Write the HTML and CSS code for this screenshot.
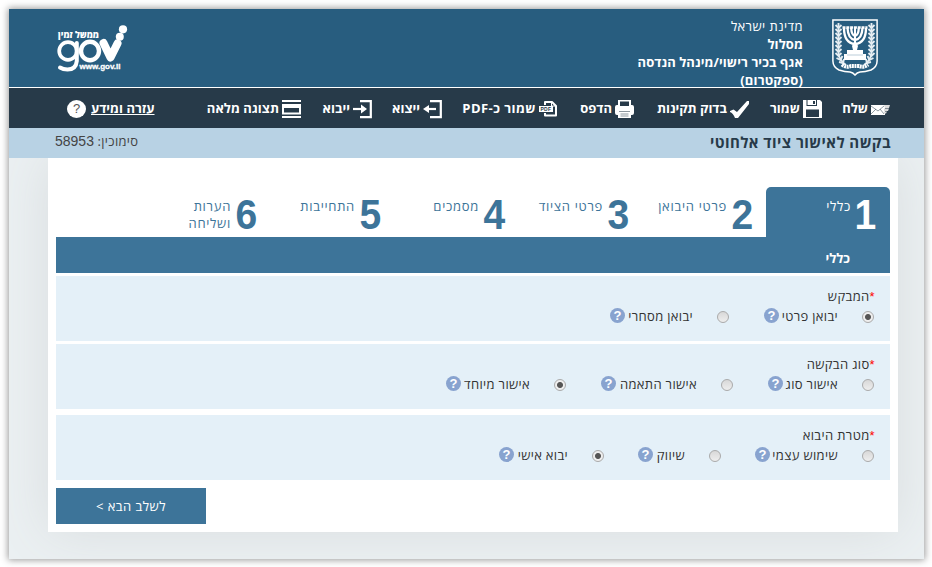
FILE: index.html
```html
<!DOCTYPE html>
<html lang="he" dir="rtl">
<head>
<meta charset="utf-8">
<title>בקשה לאישור ציוד אלחוטי</title>
<link rel="stylesheet" href="styles.css">
</head>
<body>
<div class="page">
  <header class="header">
    <svg class="emblem" viewBox="0 0 46 57" fill="none" stroke="#fff">
      <path d="M.9.9H45.100V42Q45 48 39 51Q33 53 28 53Q25 53.500 23 56Q21 53.500 18 53Q13 53 7 51Q1 48 .9 42Z" stroke-width="1.500"/>
      <g stroke="#e5edf2" stroke-width="1.900">
        <path d="M6.500 4V34Q7 41 14 46M39.500 4V34Q39 41 32 46"/>
        <path d="M3.500 6l3 3 3-3M3.500 10l3 3 3-3M3.500 14l3 3 3-3M3.500 18l3 3 3-3M3.500 22l3 3 3-3M3.500 26l3 3 3-3M3.500 30l3 3 3-3M3.500 34l3 3 3-3M4.500 39l4 2 2-4M7 43l4 1 1-4"/>
        <path d="M36.500 6l3 3 3-3M36.500 10l3 3 3-3M36.500 14l3 3 3-3M36.500 18l3 3 3-3M36.500 22l3 3 3-3M36.500 26l3 3 3-3M36.500 30l3 3 3-3M36.500 34l3 3 3-3M41.500 39l-4 2-2-4M39 43l-4 1-1-4"/>
      </g>
      <g stroke-width="2.300"><path d="M12 9Q12 24 23 25Q34 24 34 9"/><path d="M15.500 9Q16 20 23 21Q30 20 30.500 9"/><path d="M19.200 9Q19.500 16 23 17Q26.500 16 26.800 9"/><path d="M10.500 8.500H35.500" stroke-width="2.500" stroke-dasharray="3 .8"/></g>
      <path d="M22 8h2v15l2 4-1 4h6v4h3v6H12v-6h3v-4h6l-1-4 2-4z" fill="#fff" stroke="none"/>
      <path d="M15 36H31" stroke="#9db8c9" stroke-width=".7"/>
      <path d="M10 45.500Q14 49 19 47H27Q32 49 36 45.500" stroke-width="4" stroke-dasharray="2 .6"/>
    </svg>
    <div class="org">
      <div class="wide">מדינת ישראל</div>
      <div class="b">מסלול</div>
      <div class="b">אגף בכיר רישוי/מינהל הנדסה</div>
      <div class="b wide">(ספקטרום)</div>
    </div>
    <svg class="gov" viewBox="0 0 72 48">
      <g fill="none" stroke="#fff">
        <circle cx="11" cy="26" r="8.800" stroke-width="3.700"/>
        <path d="M19.800 18V36Q19 44.500 10.500 44.500Q6 44.500 3 42.500" stroke-width="4" stroke-linecap="round"/>
        <ellipse cx="33" cy="26" rx="9" ry="9.200" stroke-width="4.400"/>
        <path d="M46.500 18L53.500 32.500L60.500 18.500" stroke-width="8" stroke-linecap="round" stroke-linejoin="round"/>
      </g>
      <circle cx="62.800" cy="11.800" r="4" fill="#fff"/><circle cx="66" cy="4.300" r="4.100" fill="#fff"/>
      <text x="1" y="13" textLength="41" lengthAdjust="spacingAndGlyphs" class="gov-he">ממשל זמין</text>
      <text x="22.500" y="44" textLength="41" lengthAdjust="spacingAndGlyphs" class="gov-url">www.gov.il</text>
    </svg>
  </header>
  <nav class="toolbar">
    <a class="tool t1"><svg viewBox="0 0 19 19"><path d="M0 5h14v10H0z" fill="#fff"/><path d="M0 6l7 5 6-5M0 14l5-5M13 14L9 9" stroke="#273a49" stroke-width=".5" fill="none"/><path d="M13 5h6l-1 3h-4zM13 8.500h5l-1 2.500h-4zM13 11.500h3l-1 2h-2z" fill="#ddd"/></svg><span>שלח</span></a>
    <a class="tool t2"><svg viewBox="0 0 19 19"><path d="M0 0H17L19 2V18H0z" fill="#fff"/><path d="M3.500 0h10.500v6H3.500zM3 9.500h13V17H3z" fill="#273a49"/><path d="M4.500 0h8.500v5h-8.500z" fill="#fff"/><path d="M10 1h2v3h-2z" fill="#273a49"/></svg><span>שמור</span></a>
    <a class="tool t3"><svg viewBox="0 0 19 19"><path d="M0 11L3.500 9.500L7 12L17 1L19 1V4L8 18H5Q3 13 0 12z" fill="#fff"/></svg><span>בדוק תקינות</span></a>
    <a class="tool t4"><svg viewBox="0 0 19 19"><path d="M3 0h13v5h1q2 0 2 2v6q0 2-2 2h-1v3H3v-3H2q-2 0-2-2V7q0-2 2-2h1z" fill="#fff"/><path d="M5 1.500h9V6H5z" fill="#273a49"/><path d="M4 11.500h11M5.500 14h8M5.500 16h8" stroke="#8c969e" fill="none"/></svg><span>הדפס</span></a>
    <a class="tool t5"><svg viewBox="0 0 19 19"><path d="M6 5V2H13L17 6V15.500H6V13" fill="none" stroke="#fff" stroke-width="2" stroke-linejoin="round"/><path d="M0 6H14V12H0z" fill="#fff"/><path d="M12.500 2V6H17" fill="none" stroke="#fff"/><text x="1.500" y="11" class="pdf" textLength="11">PDF</text></svg><span>שמור כ-PDF</span></a>
    <a class="tool t6"><svg viewBox="0 0 19 19"><path d="M7 1.200H17.800V17.200H7" fill="none" stroke="#fff" stroke-width="2.200"/><path d="M13 9H4" stroke="#fff" stroke-width="2.200"/><path d="M0 9L6 5V13z" fill="#fff"/></svg><span>ייצוא</span></a>
    <a class="tool t7"><svg viewBox="0 0 19 19"><path d="M7 1.200H17.800V17.200H7" fill="none" stroke="#fff" stroke-width="2.200"/><path d="M0 9H10" stroke="#fff" stroke-width="2.200"/><path d="M14 9L8 4.500V13.500z" fill="#fff"/></svg><span>ייבוא</span></a>
    <a class="tool t8"><svg viewBox="0 0 19 19"><path d="M0 1H19M0 17H19" stroke="#fff" stroke-width="2"/><path d="M0 4h19v10.500H0zM2 8v4.500h15V8z" fill="#fff" fill-rule="evenodd"/></svg><span>תצוגה מלאה</span></a>
    <a class="help-link"><span>עזרה ומידע</span><i>?</i></a>
  </nav>
  <div class="titlebar"><h1>בקשה לאישור ציוד אלחוטי</h1><div class="ref">סימוכין: <span class="num">58953</span></div></div>
  <main class="content">
    <div class="tabs">
      <div class="tab active"><b>1</b><span>כללי</span></div>
      <div class="tab"><b>2</b><span>פרטי היבואן</span></div>
      <div class="tab"><b>3</b><span>פרטי הציוד</span></div>
      <div class="tab"><b>4</b><span>מסמכים</span></div>
      <div class="tab"><b>5</b><span>התחייבות</span></div>
      <div class="tab"><b>6</b><span>הערות<br>ושליחה</span></div>
    </div>
    <h2 class="section">כללי</h2>
    <section class="group">
      <div class="legend"><em>*</em>המבקש</div>
      <div class="options">
        <label class="opt"><i class="radio on"></i><span class="w56">יבואן פרטי</span><b class="q">?</b></label>
        <label class="opt"><i class="radio"></i><span class="w65">יבואן מסחרי</span><b class="q">?</b></label>
      </div>
    </section>
    <section class="group">
      <div class="legend"><em>*</em>סוג הבקשה</div>
      <div class="options">
        <label class="opt"><i class="radio"></i><span class="w52">אישור סוג</span><b class="q">?</b></label>
        <label class="opt"><i class="radio"></i><span class="w78">אישור התאמה</span><b class="q">?</b></label>
        <label class="opt"><i class="radio on"></i><span class="w66">אישור מיוחד</span><b class="q">?</b></label>
      </div>
    </section>
    <section class="group last">
      <div class="legend"><em>*</em>מטרת היבוא</div>
      <div class="options">
        <label class="opt"><i class="radio"></i><span class="w65">שימוש עצמי</span><b class="q">?</b></label>
        <label class="opt"><i class="radio"></i><span class="w29">שיווק</span><b class="q">?</b></label>
        <label class="opt"><i class="radio on"></i><span class="w51">יבוא אישי</span><b class="q">?</b></label>
      </div>
    </section>
    <button class="next">לשלב הבא &gt;</button>
  </main>
</div>
</body>
</html>
```
FILE: styles.css
```css
* { box-sizing: border-box; }
body { margin: 0; padding: 9px 8px 0 9px; height: 567px; overflow: hidden; background: #fff; font: 13px/18px "Open Sans", "Liberation Sans", sans-serif; color: #333; }
.page { width: 915px; height: 550px; background: #ebf0f2; box-shadow: 0 0 7px 1px #999; white-space: nowrap; overflow: hidden; }
.header { height: 79px; background: #285d7f; border-bottom: 1px solid #fff; color: #fff; display: flex; padding: 0 46px 0 48px; }
.emblem { width: 46px; height: 57px; margin-top: 10px; flex: none; }
.org { margin: 8px 29px 0 auto; line-height: 18px; }
.b { font-weight: 700; letter-spacing: .08px; }
.wide { letter-spacing: .4px; }
.b.wide { letter-spacing: .2px; }
.gov { width: 72px; height: 48px; margin-top: 16px; direction: ltr; }
.gov text { fill: #fff; }
.gov-he { font: 800 9px "Open Sans", sans-serif; direction: rtl; text-anchor: end; }
.gov-url { font: 700 8px "Liberation Sans", sans-serif; stroke: #fff; stroke-width: .3px; }
.toolbar { height: 40px; background: #273a49; color: #fff; display: flex; align-items: center; gap: 21px; padding: 2px 34px 0 58px; font-weight: 700; }
.tool { display: flex; gap: 3px; align-items: center; height: 20px; }
.tool svg { width: 19px; height: 19px; flex: none; }
.tool span, .help-link span { position: relative; top: -1px; }
.pdf { font: 700 5px "Liberation Sans", sans-serif; fill: #273a49; direction: ltr; }
.t1 { width: 47px; } .t2 { width: 52px; } .t3 { width: 94px; } .t4 { width: 55px; } .t5 { width: 95px; letter-spacing: .45px; } .t6 { width: 49px; } .t7 { width: 50px; } .t8 { width: 94px; }
.help-link { display: flex; align-items: center; gap: 5px; margin-right: auto; text-decoration: underline; }
.help-link i { width: 19px; height: 18px; border-radius: 50%; background: #fff; color: #555; font: 13px/18px "Liberation Sans", sans-serif; text-align: center; }
.titlebar { height: 30px; background: #b8d2e4; display: flex; justify-content: space-between; padding: 0 33px 0 46px; }
.titlebar h1 { margin: 0; font-size: 15px; line-height: 29px; color: #273a49; letter-spacing: .44px; }
.ref { line-height: 26px; color: #444; letter-spacing: .3px; }
.num { font: 14px "Liberation Sans", sans-serif; letter-spacing: 0; }
.content { width: 850px; height: 374px; margin: 0 26px 0 0; padding: 29px 8px 0; background: #fff; box-shadow: 0 0 50px #d9dddf; clip-path: inset(0 -60px -60px -60px); letter-spacing: .33px; }
.tabs { height: 50px; display: flex; color: #3d7499; }
.tab { width: 124px; display: flex; padding: 5px 13px 0 0; gap: 2px; }
.tab b { width: 24px; font: 700 42px/46px "Liberation Sans", sans-serif; letter-spacing: 0; transform: translateX(1px) scaleX(.93); }
.tab span { padding-top: 6px; line-height: 17px; letter-spacing: .7px; }
.tab.active { background: #3d7499; color: #fff; border-radius: 5px 5px 0 0; }
.active b { padding-right: 1px; }
.section { margin: 0 0 3px; height: 36px; background: #3d7499; color: #fff; font-size: 13px; line-height: 42px; padding-right: 40px; letter-spacing: 0; }
.group { height: 65px; background: #e4f0f8; margin-bottom: 3px; padding: 11px 15px 0; }
.group.last { margin: 6px 0 8px; }
.legend { line-height: 18px; letter-spacing: .35px; }
.legend em { color: red; font: 13px "Liberation Sans", sans-serif; }
.options { display: flex; gap: 35px; height: 22px; align-items: center; margin-right: 1px; }
.last .options { gap: 34px; }
.opt { display: flex; align-items: center; }
.radio { width: 12px; height: 12px; border: 1px solid #aaa; border-radius: 50%; background: linear-gradient(#d8d8d8, #eee); margin-left: 24px; position: relative; top: 1px; }
.radio.on { background: radial-gradient(circle, #555 0 2.500px, #eee 3.500px); }
.q { width: 15px; height: 15px; margin-right: 3px; border-radius: 50%; background: #88a3cf; color: #fff; font: 700 13px/15px "Liberation Sans", sans-serif; text-align: center; letter-spacing: 0; position: relative; top: -1px; }
.w29 { width: 29px; } .w51 { width: 51px; } .w52 { width: 52px; } .w56 { width: 56px; } .w65 { width: 65px; } .w66 { width: 66px; } .w78 { width: 78px; }
.next { display: block; width: 150px; height: 36px; margin: 0 auto 0 0; border: 0; padding: 0; background: #3d7499; color: #fff; font: 13px/36px "Open Sans", "Liberation Sans", sans-serif; letter-spacing: .45px; }
```
